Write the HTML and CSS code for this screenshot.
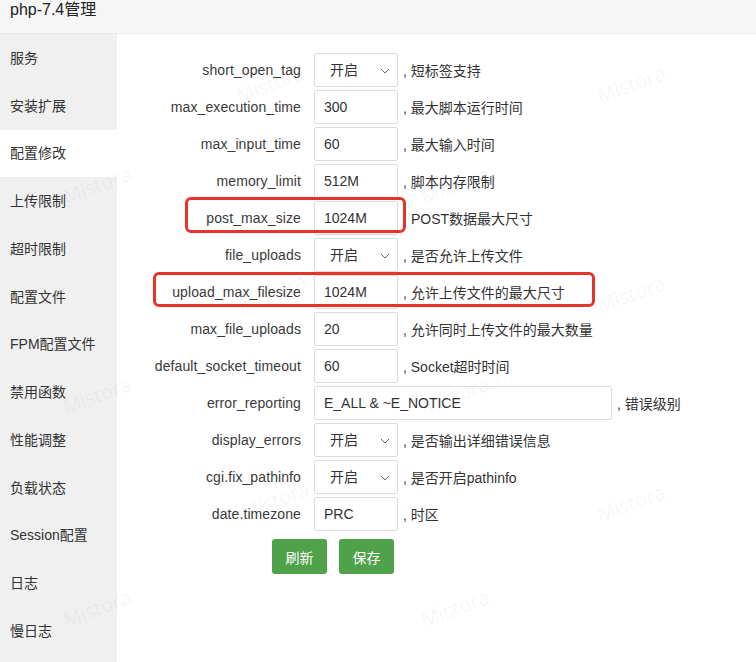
FILE: index.html
```html
<!DOCTYPE html>
<html lang="zh-CN">
<head>
<meta charset="utf-8">
<title>php-7.4管理</title>
<link rel="stylesheet" href="styles.css">
</head>
<body>
<div class="app">
  <header class="header">php-7.4管理</header>
  <div class="layout">
    <nav class="sidebar">
      <div class="nav-item">服务</div>
      <div class="nav-item">安装扩展</div>
      <div class="nav-item active">配置修改</div>
      <div class="nav-item">上传限制</div>
      <div class="nav-item">超时限制</div>
      <div class="nav-item">配置文件</div>
      <div class="nav-item">FPM配置文件</div>
      <div class="nav-item">禁用函数</div>
      <div class="nav-item">性能调整</div>
      <div class="nav-item">负载状态</div>
      <div class="nav-item">Session配置</div>
      <div class="nav-item">日志</div>
      <div class="nav-item">慢日志</div>
    </nav>
    <main class="main">
      <div class="row">
        <label class="label">short_open_tag</label>
        <div class="select-wrap">
          <select class="control select"><option>开启</option><option>关闭</option></select>
          <svg class="chev" width="10" height="6" viewBox="0 0 10 6"><path d="M1 1 L5 5 L9 1" fill="none" stroke="#666" stroke-width="1"/></svg>
        </div>
        <span class="desc">, 短标签支持</span>
      </div>
      <div class="row">
        <label class="label">max_execution_time</label>
        <input class="control input" type="text" value="300">
        <span class="desc">, 最大脚本运行时间</span>
      </div>
      <div class="row">
        <label class="label">max_input_time</label>
        <input class="control input" type="text" value="60">
        <span class="desc">, 最大输入时间</span>
      </div>
      <div class="row">
        <label class="label">memory_limit</label>
        <input class="control input" type="text" value="512M">
        <span class="desc">, 脚本内存限制</span>
      </div>
      <div class="row">
        <label class="label">post_max_size</label>
        <input class="control input" type="text" value="1024M">
        <span class="desc desc-plain">POST数据最大尺寸</span>
        <span class="mark mark-post"></span>
      </div>
      <div class="row">
        <label class="label">file_uploads</label>
        <div class="select-wrap">
          <select class="control select"><option>开启</option><option>关闭</option></select>
          <svg class="chev" width="10" height="6" viewBox="0 0 10 6"><path d="M1 1 L5 5 L9 1" fill="none" stroke="#666" stroke-width="1"/></svg>
        </div>
        <span class="desc">, 是否允许上传文件</span>
      </div>
      <div class="row">
        <label class="label">upload_max_filesize</label>
        <input class="control input" type="text" value="1024M">
        <span class="desc">, 允许上传文件的最大尺寸</span>
        <span class="mark mark-upload"></span>
      </div>
      <div class="row">
        <label class="label">max_file_uploads</label>
        <input class="control input" type="text" value="20">
        <span class="desc">, 允许同时上传文件的最大数量</span>
      </div>
      <div class="row">
        <label class="label">default_socket_timeout</label>
        <input class="control input" type="text" value="60">
        <span class="desc">, Socket超时时间</span>
      </div>
      <div class="row">
        <label class="label">error_reporting</label>
        <input class="control input input-wide" type="text" value="E_ALL &amp; ~E_NOTICE">
        <span class="desc">, 错误级别</span>
      </div>
      <div class="row">
        <label class="label">display_errors</label>
        <div class="select-wrap">
          <select class="control select"><option>开启</option><option>关闭</option></select>
          <svg class="chev" width="10" height="6" viewBox="0 0 10 6"><path d="M1 1 L5 5 L9 1" fill="none" stroke="#666" stroke-width="1"/></svg>
        </div>
        <span class="desc">, 是否输出详细错误信息</span>
      </div>
      <div class="row">
        <label class="label">cgi.fix_pathinfo</label>
        <div class="select-wrap">
          <select class="control select"><option>开启</option><option>关闭</option></select>
          <svg class="chev" width="10" height="6" viewBox="0 0 10 6"><path d="M1 1 L5 5 L9 1" fill="none" stroke="#666" stroke-width="1"/></svg>
        </div>
        <span class="desc">, 是否开启pathinfo</span>
      </div>
      <div class="row">
        <label class="label">date.timezone</label>
        <input class="control input" type="text" value="PRC">
        <span class="desc">, 时区</span>
      </div>
      <div class="actions">
        <button class="btn" type="button">刷新</button>
        <button class="btn" type="button">保存</button>
      </div>
    </main>
  </div>
  <div class="watermarks">
    <span class="wm" style="left:270px;top:84px">Mistora</span>
    <span class="wm" style="left:631px;top:84px">Mistora</span>
    <span class="wm" style="left:97px;top:185px">Mistora</span>
    <span class="wm" style="left:455px;top:185px">Mistora</span>
    <span class="wm" style="left:272px;top:292px">Mistora</span>
    <span class="wm" style="left:631px;top:294px">Mistora</span>
    <span class="wm" style="left:97px;top:395px">Mistora</span>
    <span class="wm" style="left:455px;top:395px">Mistora</span>
    <span class="wm" style="left:275px;top:500px">Mistora</span>
    <span class="wm" style="left:631px;top:503px">Mistora</span>
    <span class="wm" style="left:97px;top:608px">Mistora</span>
    <span class="wm" style="left:455px;top:608px">Mistora</span>
  </div>
</div>
</body>
</html>
```
FILE: styles.css
```css
* { box-sizing: border-box; }
html, body { margin: 0; padding: 0; background: #fff; }
body {
  font-family: "Liberation Sans", Arial, "Noto Sans CJK SC", sans-serif;
  font-size: 14px;
  color: #333;
}
.app {
  position: relative;
  width: 756px;
  height: 662px;
  display: flex;
  flex-direction: column;
  overflow: hidden;
}
.header {
  height: 34px;
  flex: none;
  background: #f6f6f6;
  border-bottom: 1px solid #ebebeb;
  padding: 0 10px;
  font-size: 16px;
  line-height: 20px;
  color: #222;
}
.layout {
  flex: 1;
  display: flex;
  min-height: 0;
}
.sidebar {
  width: 117px;
  flex: none;
  background: #f0f0f0;
  display: flex;
  flex-direction: column;
}
.nav-item {
  height: 47.75px;
  flex: none;
  display: flex;
  align-items: center;
  padding-left: 10px;
  padding-bottom: 2px;
  font-size: 14px;
  color: #333;
}
.nav-item.active { background: #fff; }
.main {
  flex: 1;
  padding-top: 19px;
  display: flex;
  flex-direction: column;
  gap: 3px;
}
.row {
  position: relative;
  display: flex;
  align-items: center;
  height: 34px;
}
.label {
  width: 184px;
  margin-right: 13px;
  text-align: right;
  color: #3a3a3a;
  font-size: 14px;
  letter-spacing: 0.1px;
}
.control {
  height: 34px;
  width: 84px;
  border: 1px solid #dcdcdc;
  border-radius: 2px;
  background: #fff;
  font: inherit;
  font-size: 14px;
  color: #333;
  outline: none;
  margin: 0;
}
.input { padding: 0 0 0 9px; }
.input-wide { width: 298px; }
.select-wrap {
  position: relative;
  width: 84px;
  height: 34px;
}
.select {
  -webkit-appearance: none;
  appearance: none;
  padding: 0 0 0 15px;
}
.chev {
  position: absolute;
  right: 8px;
  top: 15px;
  pointer-events: none;
}
.desc {
  margin-left: 5px;
  color: #333;
  white-space: nowrap;
}
.desc-plain { margin-left: 13px; }
.mark {
  position: absolute;
  border: 3px solid #e5352b;
  border-radius: 6px;
  pointer-events: none;
}
.mark-post { left: 68px; top: -4px; width: 221px; height: 36px; }
.mark-upload { left: 36px; top: -3px; width: 442px; height: 35px; }
.actions {
  display: flex;
  gap: 12px;
  padding-left: 155px;
  margin-top: 5px;
}
.btn {
  height: 35px;
  width: 55px;
  border: none;
  border-radius: 3px;
  background: #4fa14a;
  color: #fff;
  font: inherit;
  font-size: 14px;
  padding: 0;
}
.watermarks {
  position: absolute;
  inset: 0;
  pointer-events: none;
}
.wm {
  position: absolute;
  transform: translate(-50%, -50%) rotate(-20deg);
  font-family: "Open Sans", "DejaVu Sans", sans-serif;
  font-size: 20px;
  color: rgba(0, 0, 0, 0.055);
  white-space: nowrap;
}
```
